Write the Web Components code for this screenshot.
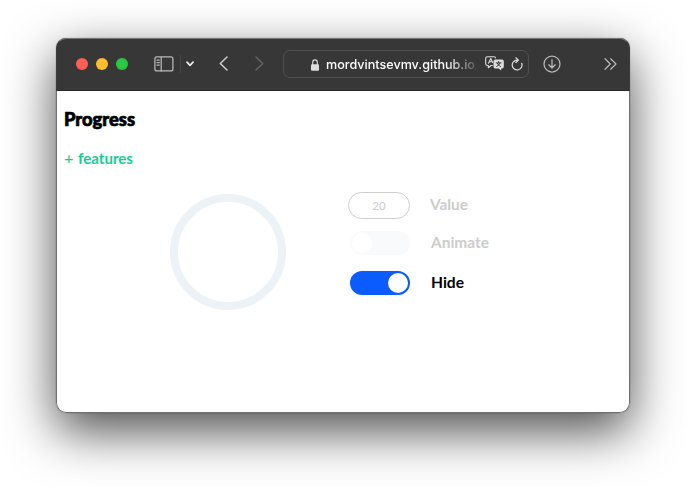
<!DOCTYPE html>
<html lang="en">
<head>
<meta charset="utf-8">
<title>Progress</title>
<style>
html,body{margin:0;height:100%;overflow:hidden;background:#fff}
body{font-family:Lato,sans-serif}
</style>
</head>
<body>
<browser-window>
  <window-toolbar slot="toolbar"><address-bar>mordvintsevmv.github.io/</address-bar></window-toolbar>
  <progress-page></progress-page>
</browser-window>
<script>
const define = (name, html, setup) => customElements.define(name, class extends HTMLElement {
  constructor() {
    super();
    this.attachShadow({ mode: 'open' }).innerHTML = html;
  }
  connectedCallback() { if (setup) setup(this, this.shadowRoot); }
});

// Single-line label whose glyph run fills a given width.
define('fit-label', `<style>
  :host{display:block;line-height:0}
  svg{display:block;overflow:visible}
  text{fill:currentColor;font-family:inherit;stroke:currentColor;stroke-width:var(--weight,0)}
</style><svg><text></text></svg>`, (el, root) => {
  const svg = root.querySelector('svg'), text = root.querySelector('text');
  const w = el.getAttribute('width'), h = el.getAttribute('height') || 20;
  svg.setAttribute('width', w);
  svg.setAttribute('height', h);
  text.setAttribute('y', el.getAttribute('baseline') || 14);
  text.setAttribute('textLength', w);
  text.setAttribute('lengthAdjust', 'spacingAndGlyphs');
  text.textContent = el.getAttribute('text');
});

define('browser-window', `<style>
  :host{display:block;box-sizing:border-box;width:686px;height:487px;padding:38px 56px 74px}
  .frame{box-sizing:border-box;width:574px;height:375px;border-radius:10px;overflow:hidden;background:#fff;display:flex;flex-direction:column;
    box-shadow:0 18px 50px rgba(0,0,0,.7),0 0 1px rgba(0,0,0,.7);position:relative}
  .frame::after{content:"";position:absolute;inset:0;border-radius:10px;border:1px solid rgba(65,65,65,.75);border-top-color:#777;pointer-events:none}
  .page{flex:1}
</style><div class="frame"><slot name="toolbar"></slot><div class="page"><slot></slot></div></div>`);

define('traffic-lights', `<style>
  :host{display:flex;gap:8px}
  i{width:12px;height:12px;border-radius:50%;background:#ff5f57}
  i:nth-of-type(2){background:#febc2e}
  i:nth-of-type(3){background:#28c840}
</style><i></i><i></i><i></i>`);

const icons = {
  sidebar: [20, 16, '<rect x=".9" y=".9" width="18" height="14" rx="2"/><path d="M7.2 1v14M3 4h2.3M3 6.5h2.3M3 9h2.3"/>'],
  down: [8, 6, '<path stroke-width="1.7" d="M1 1.2 4 4.3 7 1.2"/>'],
  back: [9, 15, '<path stroke-width="1.5" d="M8 1 1.3 7.5 8 14"/>'],
  forward: [9, 15, '<path d="M1 1 7.7 7.5 1 14"/>'],
  lock: [8, 12, '<rect x="0" y="5.2" width="8" height="6.6" rx="1" fill="currentColor" stroke="none"/><path stroke-width="1.1" d="M1.7 6V3.2a2.3 2.3 0 0 1 4.6 0V6"/>'],
  translate: [19, 15, '<path stroke-width="1.1" d="M7.3 9.5H6L3.3 11.7V9.5H2.4Q.7 9.5.7 7.8V2.4Q.7.7 2.4.7h6.7q1.3 0 1.5 1.2M3.5 7.3 5.8 2.4 7.6 6.4M4.4 5.8h2.6"/><path fill="currentColor" stroke="none" d="M10.2 3.6h6.9q1.7 0 1.7 1.7v5.4q0 1.7-1.7 1.7h-.9v2l-2.7-2h-3.3q-1.7 0-1.7-1.7V5.3q0-1.7 1.7-1.7z"/><path stroke="#373737" stroke-width=".9" d="M11.2 6.9h4.9M13.6 5.5v1.3M11.7 10.5q2.8-1.2 3.4-3.6M12.2 7.2q.8 2.2 3.3 3.3"/>'],
  reload: [12, 14, '<path d="M10.7 6.3A4.9 4.9 0 1 1 6 3.1h1.1M4.9.8l2.5 2.3L5 5.5"/>'],
  download: [18, 18, '<circle cx="9" cy="9" r="8"/><path d="M9 4.7v8.1M5.8 9.8 9 13l3.2-3.2"/>'],
  more: [13, 12, '<path d="M1 .8 6.3 6 1 11.2M6.7.8 12 6l-5.3 5.2"/>']
};
define('tool-icon', `<style>:host{display:block}svg{display:block;fill:none;stroke:currentColor;stroke-width:1.25;stroke-linecap:round;stroke-linejoin:round}</style><svg></svg>`, (el, root) => {
  const [w, h, body] = icons[el.getAttribute('name')], svg = root.querySelector('svg');
  svg.setAttribute('width', w);
  svg.setAttribute('height', h);
  svg.innerHTML = body;
});

define('window-toolbar', `<style>
  :host{display:flex;align-items:center;box-sizing:border-box;height:53px;flex:none;padding:0 13px 1px 20px;background:#373737;border-bottom:1px solid #292929;color:#b9b9b9}
  .side{margin-left:26px}
  .rule{width:1px;height:18px;background:#484848;margin:0 5px 0 6px}
  .chevron{color:#eee}
  .back{margin-left:25px;color:#ccc}
  .forward{margin:0 19px 0 27px;color:#686868}
  .download{margin-left:14px}
  .more{margin-left:auto}
</style>
<traffic-lights></traffic-lights>
<tool-icon class="side" name="sidebar"></tool-icon><span class="rule"></span>
<tool-icon class="chevron" name="down"></tool-icon>
<tool-icon class="back" name="back"></tool-icon>
<tool-icon class="forward" name="forward"></tool-icon>
<slot></slot>
<tool-icon class="download" name="download"></tool-icon>
<tool-icon class="more" name="more"></tool-icon>`);

define('address-bar', `<style>
  :host{display:flex;align-items:center;box-sizing:border-box;width:246px;height:28px;border:1px solid #505050;border-radius:7px;padding:0 5px 0 27px;color:#ddd}
  .url{font:500 12.6px/18px Inter,sans-serif;color:#fff;width:150px;margin:3px 0 0 7px;overflow:hidden;white-space:nowrap;
    -webkit-mask-image:linear-gradient(90deg,#000 120px,transparent 156px);mask-image:linear-gradient(90deg,#000 120px,transparent 156px)}
  .lock{margin-top:2px}
  .translate{margin-left:9px}
  .reload{margin-left:auto}
</style><tool-icon class="lock" name="lock"></tool-icon><span class="url"><slot></slot></span>
<tool-icon class="translate" name="translate"></tool-icon><tool-icon class="reload" name="reload"></tool-icon>`);

define('progress-ring', `<style>:host{display:block;box-sizing:border-box;width:116px;height:116px;border:8px solid #ecf2f5;border-radius:50%}</style>`);

define('value-field', `<style>
  :host{display:flex;align-items:center;justify-content:center;box-sizing:border-box;width:62px;height:27px;border:1px solid #cecece;border-radius:14px;color:#ccc;font:11.5px/1 Lato,sans-serif}
</style><slot></slot>`);

define('toggle-switch', `<style>
  :host{display:flex;align-items:center;box-sizing:border-box;width:60px;height:24px;border-radius:12px;padding:0 2px;background:#f8fafc}
  :host([checked]){justify-content:flex-end;background:#0b5cff}
  i{width:20px;height:20px;border-radius:50%;background:#fff}
</style><i></i>`);

define('progress-page', `<style>
  :host{display:block;padding:19px 8px 0;color:#000}
  .heading{font-weight:900;font-size:18px;--weight:.7px}
  .link{display:flex;gap:4px;font-weight:700;font-size:16px;color:#13ce94;margin-top:19px}
  .plus{font-weight:400}
  .demo{display:flex;align-items:flex-start;padding:24px 0 0 106px}
  .controls{display:grid;margin:-1px 0 0 62px}
  .row{display:flex;align-items:center;height:27px;font-weight:700;font-size:16px}
  .row + .row{padding-left:2px}
  .row:nth-child(2){margin-top:10.5px}
  .row:nth-child(3){margin-top:13px}
  .row fit-label{margin-left:19.5px}
  .row + .row fit-label{margin-left:21px}
  .off{color:#ccc}
  .demo progress-ring{margin-top:1px}
</style>
<fit-label class="heading" text="Progress" width="71" height="20" baseline="16"></fit-label>
<div class="link"><fit-label class="plus" text="+" width="9.5" baseline="15"></fit-label><fit-label text="features" width="55" baseline="15"></fit-label></div>
<div class="demo">
  <progress-ring></progress-ring>
  <div class="controls">
    <div class="row off"><value-field>20</value-field><fit-label text="Value" width="38"></fit-label></div>
    <div class="row off"><toggle-switch></toggle-switch><fit-label text="Animate" width="58" baseline="15"></fit-label></div>
    <div class="row"><toggle-switch checked></toggle-switch><fit-label text="Hide" width="33" baseline="15"></fit-label></div>
  </div>
</div>`);
</script>
</body>
</html>
